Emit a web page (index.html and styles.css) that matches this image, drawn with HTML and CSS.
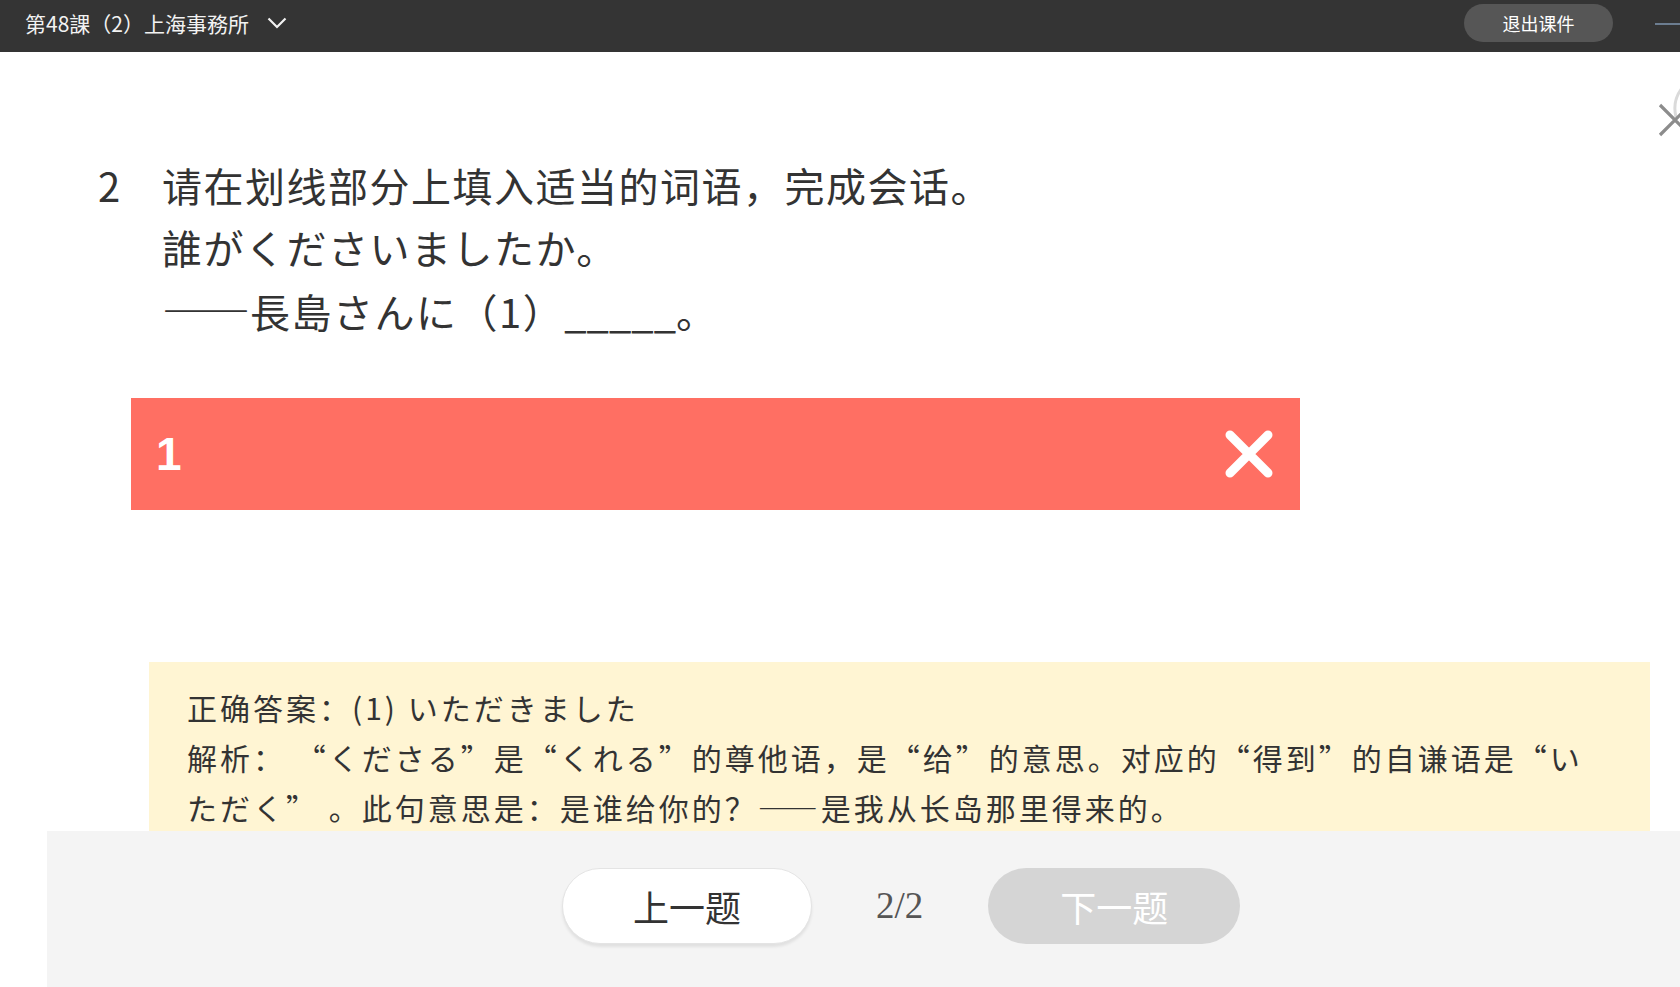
FILE: index.html
```html
<!DOCTYPE html>
<html lang="zh-CN">
<head>
<meta charset="utf-8">
<title>第48課（2）上海事務所</title>
<link rel="stylesheet" href="styles.css">
</head>
<body>
<header class="topbar">
  <div class="course">
    <span class="course-title">第48課（2）上海事務所</span>
    <svg class="chev" width="20" height="12" viewBox="0 0 20 12"><path d="M1.5 1.5 L10 10 L18.5 1.5" fill="none" stroke="#f2f2f2" stroke-width="2.2"/></svg>
  </div>
  <div class="actions">
    <button class="exit">退出课件</button>
    <span class="minline"></span>
  </div>
</header>

<svg class="close-corner" width="30" height="60" viewBox="0 0 30 60">
  <path d="M21 32 Q17 16 27 3" fill="none" stroke="#dadada" stroke-width="3"/>
  <path d="M5 20 L35 50 M5 50 L35 20" stroke="#8c8c8c" stroke-width="3.2"/>
</svg>

<main class="main">
  <section class="question">
    <div class="qnum">2</div>
    <div class="qbody">
      <p>请在划线部分上填入适当的词语，完成会话。</p>
      <p>誰がくださいましたか。</p>
      <p><span class="dash">——</span>長島さんに（1）<span class="blank">_____</span>。</p>
    </div>
  </section>

  <div class="result wrong">
    <span class="rnum">1</span>
    <svg class="rmark" width="50" height="50" viewBox="0 0 50 50"><path d="M6 6 L44 44 M44 6 L6 44" stroke="#fff" stroke-width="9" stroke-linecap="round"/></svg>
  </div>

  <div class="analysis">
    <p>正确答案：(1) いただきました</p>
    <p>解析： “くださる”是“くれる”的尊他语，是“给”的意思。对应的“得到”的自谦语是“いただく” 。此句意思是：是谁给你的？——是我从长岛那里得来的。</p>
  </div>
</main>

<footer class="footer">
  <button class="btn prev">上一题</button>
  <span class="pager">2/2</span>
  <button class="btn next">下一题</button>
</footer>
</body>
</html>
```

FILE: styles.css
```css
* {
  box-sizing: border-box;
}

html,
body {
  margin: 0;
  padding: 0;
}

body {
  width: 1680px;
  height: 987px;
  overflow: hidden;
  position: relative;
  background: #ffffff;
  color: #333333;
  font-family: "Noto Sans CJK SC", "Noto Sans", sans-serif;
}

.topbar {
  height: 52px;
  background: #343434;
  display: flex;
  align-items: flex-start;
  justify-content: space-between;
  padding-left: 25px;
}

.course {
  display: flex;
  align-items: center;
  gap: 18px;
  margin-top: 8px;
  height: 30px;
  color: #f2f2f2;
  font-size: 21px;
  line-height: 30px;
}

.chev {
  display: block;
}

.actions {
  display: flex;
  align-items: flex-start;
}

.exit {
  margin-top: 4px;
  width: 149px;
  height: 38px;
  border: 0;
  border-radius: 19px;
  background: #565656;
  color: #ffffff;
  font-family: "Noto Sans CJK SC", sans-serif;
  font-size: 18px;
  padding: 0;
}

.minline {
  display: block;
  width: 25px;
  height: 2px;
  margin-top: 23px;
  margin-left: 42px;
  background: #6c7d90;
}

.close-corner {
  position: absolute;
  top: 85px;
  left: 1655px;
  overflow: visible;
}

.main {
  padding-top: 102px;
}

.question {
  display: flex;
  padding-left: 98px;
  font-size: 40px;
  line-height: 62px;
  letter-spacing: 1.5px;
  color: #333333;
}

.qnum {
  width: 64px;
  flex: none;
}

.qbody p {
  margin: 0;
  height: 62px;
  white-space: nowrap;
}

.dash {
  font-size: 44px;
  letter-spacing: 0;
}

.blank {
  letter-spacing: 0;
}

.result {
  margin: 58px 0 0 131px;
  width: 1169px;
  height: 112px;
  display: flex;
  align-items: center;
  justify-content: space-between;
  padding: 0 26px 0 25px;
}

.wrong {
  background: #ff6f63;
}

.rnum {
  font-family: "Liberation Sans", Arial, sans-serif;
  font-weight: bold;
  font-size: 46px;
  color: #ffffff;
}

.rmark {
  display: block;
}

.analysis {
  margin: 152px 0 0 149px;
  width: 1501px;
  background: #fff5d3;
  padding: 20px 45px 25px 38px;
  font-size: 30px;
  line-height: 50px;
  letter-spacing: 3px;
  color: #333333;
}

.analysis p {
  margin: 0;
}

.footer {
  position: fixed;
  left: 47px;
  right: 0;
  bottom: 0;
  height: 156px;
  background: #f4f4f4;
  display: flex;
  align-items: flex-start;
  padding: 37px 0 0 515px;
}

.btn {
  height: 76px;
  border-radius: 38px;
  font-family: "Noto Sans CJK SC", sans-serif;
  font-size: 36px;
  padding: 0;
  flex: none;
}

.prev {
  width: 250px;
  background: #ffffff;
  border: 1px solid #e4e4e4;
  box-shadow: 0 3px 3px rgba(0, 0, 0, 0.08);
  color: #333333;
}

.next {
  width: 252px;
  background: #d5d5d5;
  border: 0;
  color: #ffffff;
}

.pager {
  margin: 0 65px 0 64px;
  font-family: "Liberation Serif", "Times New Roman", serif;
  font-size: 37px;
  line-height: 76px;
  color: #555555;
}
```
